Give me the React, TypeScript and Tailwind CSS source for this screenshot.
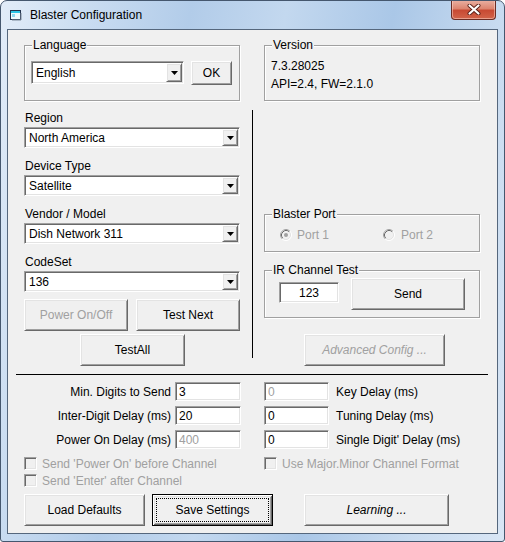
import React from 'react';

const sunken =
  'border border-t-[#a0a0a0] border-l-[#a0a0a0] border-r-white border-b-white shadow-[inset_1px_1px_0_#696969,inset_-1px_-1px_0_#e3e3e3]';
const raised =
  'border border-t-white border-l-white border-r-[#696969] border-b-[#696969] bg-[#f0f0f0] shadow-[inset_1px_1px_0_#e3e3e3,inset_-1px_-1px_0_#a0a0a0]';

const Arrow = () => (
  <svg width="7" height="4" viewBox="0 0 7 4" className="ml-[1px] mt-[1px]">
    <polygon points="0,0 7,0 3.5,4" fill="#000" />
  </svg>
);

const Combo = ({ value, className }: { value: string; className: string }) => (
  <div className={`${sunken} flex items-center bg-white ${className}`}>
    <span className="flex-1 pl-[4px] leading-[14px]">{value}</span>
    <span className={`${raised} mr-[1px] flex h-[calc(100%-2px)] w-[16px] items-center justify-center`}>
      <Arrow />
    </span>
  </div>
);

const Button = ({
  children,
  className = '',
  disabled = false,
  italic = false,
}: {
  children: React.ReactNode;
  className?: string;
  disabled?: boolean;
  italic?: boolean;
}) => (
  <div
    className={`${raised} flex items-center justify-center leading-[14px] ${disabled ? 'text-[#a0a0a0]' : ''} ${
      italic ? 'italic' : ''
    } ${className}`}
  >
    {children}
  </div>
);

const Group = ({ label, className, children }: { label: string; className: string; children?: React.ReactNode }) => (
  <div className={`relative w-[216px] border border-[#a0a0a0] shadow-[inset_1px_1px_0_#fff,1px_1px_0_#fff] ${className}`}>
    <span className="absolute left-[7px] top-[-8px] bg-[#f0f0f0] px-[1px] leading-[14px]">{label}</span>
    {children}
  </div>
);

const Field = ({ value, className = '', gray = false }: { value: string; className?: string; gray?: boolean }) => (
  <div
    className={`${sunken} flex h-[19px] w-[65px] items-center bg-white pl-[3px] leading-[14px] ${gray ? 'text-[#a0a0a0]' : ''} ${className}`}
  >
    {value}
  </div>
);

const Radio = ({ checked }: { checked?: boolean }) => (
  <svg width="12" height="12" viewBox="0 0 12 12">
    <circle cx="6" cy="6" r="5.5" fill="#f0f0f0" stroke="#fff" />
    <path d="M2.11 9.89 A5.5 5.5 0 0 1 9.89 2.11" fill="none" stroke="#a0a0a0" />
    <path d="M2.82 9.18 A4.5 4.5 0 0 1 9.18 2.82" fill="none" stroke="#696969" />
    <path d="M9.18 2.82 A4.5 4.5 0 0 1 2.82 9.18" fill="none" stroke="#e3e3e3" />
    {checked && <circle cx="6" cy="6" r="2" fill="#a0a0a0" />}
  </svg>
);

const Check = ({ label, className = '' }: { label: string; className?: string }) => (
  <div className={`flex h-[13px] items-center ${className}`}>
    <span className={`${sunken} h-[13px] w-[13px] shrink-0 bg-[#f0f0f0]`} />
    <span className="ml-[5px] leading-[14px] text-[#a0a0a0]">{label}</span>
  </div>
);

const LabeledCombo = ({ label, value, last }: { label: string; value: string; last?: boolean }) => (
  <div className={last ? '' : 'mb-[11px]'}>
    <div className="h-[14px] pl-[1px] leading-[14px]">{label}</div>
    <Combo value={value} className="mt-[2px] h-[21px] w-[216px]" />
  </div>
);

const App: React.FC = () => {
  return (
    <div className="flex h-[542px] w-[505px] flex-col overflow-hidden rounded-t-[7px] rounded-b-[3px] border border-[#45576e] bg-[linear-gradient(100deg,#e2ecf8_0%,#c9dcf1_15%,#b2cce9_32%,#c3d8ef_48%,#aac7e7_66%,#c8dbf0_84%,#d9e6f5_100%)] font-['Liberation_Sans',Arial,sans-serif] text-[12px] text-black">
      {/* title bar */}
      <div className="flex h-[28px] shrink-0">
        <div className="flex items-center pl-[9px]">
          <svg width="13" height="12" viewBox="0 0 13 12">
            <rect x="0.5" y="1.5" width="10" height="9" fill="#eef8fc" stroke="#22334d" />
            <rect x="1" y="2" width="9" height="2" fill="#2bc4e6" />
            <rect x="2" y="5" width="3" height="3" fill="#8fd8ef" />
            <path d="M11 4 V11 H2" fill="none" stroke="#7a8798" />
          </svg>
          <span className="ml-[7px] leading-[14px]">Blaster Configuration</span>
        </div>
        <div className="ml-auto mr-[8px] -mt-[1px] flex h-[20px] w-[45px] items-center justify-center rounded-b-[4px] border border-t-0 border-[#6a2c24] bg-[linear-gradient(180deg,#eab2a4_0%,#dc8570_45%,#c84a33_55%,#d2644a_100%)] shadow-[inset_0_0_0_1px_rgba(255,220,210,0.5)]">
          <svg width="14" height="11" viewBox="0 0 14 11">
            <path d="M2.5 1.5 L11.5 9.5 M11.5 1.5 L2.5 9.5" stroke="#5a2018" strokeWidth="4" strokeLinecap="round" />
            <path d="M2.5 1.5 L11.5 9.5 M11.5 1.5 L2.5 9.5" stroke="#fff" strokeWidth="2.2" strokeLinecap="round" />
          </svg>
        </div>
      </div>

      {/* client area */}
      <div className="mx-[6px] h-[505px] shrink-0 border border-[#55677d] bg-[#f0f0f0] px-[8px] pt-[15px]">
        <div className="ml-[8px] flex items-start">
          {/* left column */}
          <div className="w-[216px]">
            <Group label="Language" className="h-[56px]">
              <div className="flex items-start pl-[6px] pt-[15px]">
                <Combo value="English" className="h-[23px] w-[153px]" />
                <Button className="ml-[7px] h-[24px] w-[41px]">OK</Button>
              </div>
            </Group>
            <div className="mt-[10px]">
              <LabeledCombo label="Region" value="North America" />
              <LabeledCombo label="Device Type" value="Satellite" />
              <LabeledCombo label="Vendor / Model" value="Dish Network 311" />
              <LabeledCombo label="CodeSet" value="136" last />
            </div>
            <div className="mt-[7px] flex">
              <Button disabled className="h-[32px] w-[104px]">
                Power On/Off
              </Button>
              <Button className="ml-[8px] h-[32px] w-[104px]">Test Next</Button>
            </div>
            <Button className="ml-[56px] mt-[3px] h-[32px] w-[105px]">TestAll</Button>
          </div>

          <div className="ml-[12px] mt-[65px] h-[248px] w-[1px] bg-black" />

          {/* right column */}
          <div className="ml-[11px] w-[216px]">
            <Group label="Version" className="h-[56px]">
              <div className="pl-[6px] pt-[11px] leading-[18px]">
                <div>7.3.28025</div>
                <div>API=2.4, FW=2.1.0</div>
              </div>
            </Group>
            <Group label="Blaster Port" className="mt-[113px] h-[38px]">
              <div className="flex items-center pl-[15px] pt-[13px] leading-[14px] text-[#a0a0a0]">
                <div className="flex w-[103px] items-center">
                  <Radio checked />
                  <span className="ml-[5px]">Port 1</span>
                </div>
                <div className="flex items-center">
                  <Radio />
                  <span className="ml-[6px]">Port 2</span>
                </div>
              </div>
            </Group>
            <Group label="IR Channel Test" className="mt-[18px] h-[48px]">
              <div className="flex items-start pl-[14px] pt-[7px]">
                <div className={`${sunken} mt-[4px] flex h-[21px] w-[60px] items-center justify-center bg-white leading-[14px]`}>
                  123
                </div>
                <Button className="ml-[12px] h-[32px] w-[114px]">Send</Button>
              </div>
            </Group>
            <Button disabled italic className="ml-[40px] mt-[16px] h-[32px] w-[141px]">
              Advanced Config ...
            </Button>
          </div>
        </div>

        <div className="mt-[8px] h-[1px] w-[472px] bg-black" />

        {/* delay fields */}
        <div className="mt-[7px] flex flex-col gap-[5px] leading-[14px]">
          {[
            { l: 'Min. Digits to Send', lv: '3', lg: false, r: 'Key Delay (ms)', rv: '0', rg: true },
            { l: 'Inter-Digit Delay (ms)', lv: '20', lg: false, r: 'Tuning Delay (ms)', rv: '0', rg: false },
            { l: 'Power On Delay (ms)', lv: '400', lg: true, r: "Single Digit' Delay (ms)", rv: '0', rg: false },
          ].map(row => (
            <div key={row.l} className="flex h-[19px] items-center">
              <div className="w-[155px] text-right">{row.l}</div>
              <Field value={row.lv} gray={row.lg} className="ml-[4px] w-[66px]" />
              <Field value={row.rv} gray={row.rg} className="ml-[23px]" />
              <div className="ml-[7px]">{row.r}</div>
            </div>
          ))}
        </div>

        {/* options */}
        <div className="ml-[8px] mt-[8px] flex flex-col gap-[4px]">
          <div className="flex">
            <Check label="Send 'Power On' before Channel" className="w-[240px]" />
            <Check label="Use Major.Minor Channel Format" />
          </div>
          <Check label="Send 'Enter' after Channel" />
        </div>

        {/* bottom buttons */}
        <div className="ml-[8px] mt-[7px] flex">
          <Button className="h-[32px] w-[121px]">Load Defaults</Button>
          <div className="relative ml-[7px] flex h-[32px] w-[121px] items-center justify-center border border-black bg-[#f0f0f0] leading-[14px] shadow-[inset_1px_1px_0_#fff,inset_-1px_-1px_0_#696969,inset_2px_2px_0_#e3e3e3,inset_-2px_-2px_0_#a0a0a0]">
            Save Settings
            <span className="absolute inset-[3px] border border-dotted border-black" />
          </div>
          <Button italic className="ml-[31px] h-[32px] w-[145px]">
            Learning ...
          </Button>
        </div>
      </div>
    </div>
  );
};

export default App;
